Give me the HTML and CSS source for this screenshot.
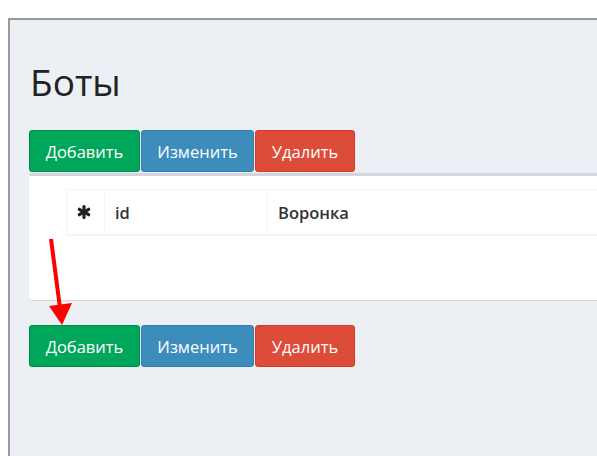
FILE: index.html
```html
<!DOCTYPE html>
<html lang="ru">
<head>
<meta charset="utf-8">
<title>Боты</title>
<link rel="stylesheet" href="styles.css">
</head>
<body>
<div class="page">
  <div class="frame">
    <div class="content">
      <h1 class="title">Боты</h1>
      <div class="btn-group">
        <button class="btn btn-green">Добавить</button>
        <button class="btn btn-blue">Изменить</button>
        <button class="btn btn-red">Удалить</button>
      </div>
      <div class="box">
        <table class="grid">
          <thead>
            <tr>
              <th class="col-star">
                <svg class="star" viewBox="0 0 14 14" width="14" height="14" aria-hidden="true">
                  <g stroke="#222" stroke-width="3.2" stroke-linecap="round">
                    <line x1="7" y1="1.6" x2="7" y2="12.4"/>
                    <line x1="2.3" y1="4.3" x2="11.7" y2="9.7"/>
                    <line x1="2.3" y1="9.7" x2="11.7" y2="4.3"/>
                  </g>
                </svg>
              </th>
              <th class="col-id">id</th>
              <th class="col-name">Воронка</th>
            </tr>
          </thead>
        </table>
      </div>
      <div class="btn-group btn-group-bottom">
        <button class="btn btn-green">Добавить</button>
        <button class="btn btn-blue">Изменить</button>
        <button class="btn btn-red">Удалить</button>
      </div>
    </div>
  </div>
  <svg class="arrow" width="597" height="456" viewBox="0 0 597 456" aria-hidden="true">
    <line x1="51" y1="239" x2="60" y2="308" stroke="#ff0000" stroke-width="4"/>
    <polygon points="49,306 72,303 62,325" fill="#ff0000"/>
  </svg>
</div>
</body>
</html>
```
FILE: styles.css
```css
html, body {
  margin: 0;
  padding: 0;
  background: #ffffff;
  overflow: hidden;
}
body {
  font-family: "Open Sans", "Liberation Sans", sans-serif;
  color: #333;
}
.page {
  position: relative;
  width: 597px;
  height: 456px;
  padding: 18px 0 0 8px;
  box-sizing: border-box;
}
.frame {
  border-top: 2px solid #999;
  border-left: 2px solid #999;
  background: #ecf0f5;
  height: 100%;
  box-sizing: border-box;
  margin-right: -10px;
}
.content {
  padding: 42px 0 0 19px;
}
.title {
  margin: 0 0 28px 1px;
  font-size: 37px;
  line-height: 40px;
  font-weight: 400;
  color: #222;
}
.btn-group {
  display: flex;
  gap: 1px;
}
.btn {
  font-family: inherit;
  font-size: 16.5px;
  height: 42px;
  padding: 0 14px;
  border-radius: 3px;
  border: 1px solid transparent;
  color: #fff;
  cursor: pointer;
}
.btn-green { background: #00a65a; border-color: #008d4c; width: 111px; }
.btn-blue  { background: #3c8dbc; border-color: #367fa9; width: 113px; }
.btn-red   { background: #dd4b39; border-color: #d73925; width: 100px; }
.box {
  margin-top: 1px;
  background: #fff;
  border-top: 3px solid #d2d6de;
  border-radius: 3px;
  box-shadow: 0 1px 1px rgba(0,0,0,0.1);
  height: 127px;
  box-sizing: border-box;
  padding: 13px 0 0 37px;
}
.grid {
  width: 100%;
  border-collapse: collapse;
}
.grid th {
  border: 1px solid #f4f4f4;
  border-bottom-width: 2px;
  height: 44px;
  padding: 0 10px;
  text-align: left;
  font-size: 16.5px;
  font-weight: 600;
  color: #333;
}
.grid .col-star { width: 17px; padding: 0 10px; }
.grid .col-id { width: 142px; }
.star { display: block; }
.btn-group-bottom {
  margin-top: 25px;
}
.arrow {
  position: absolute;
  left: 0;
  top: 0;
  pointer-events: none;
}
```
